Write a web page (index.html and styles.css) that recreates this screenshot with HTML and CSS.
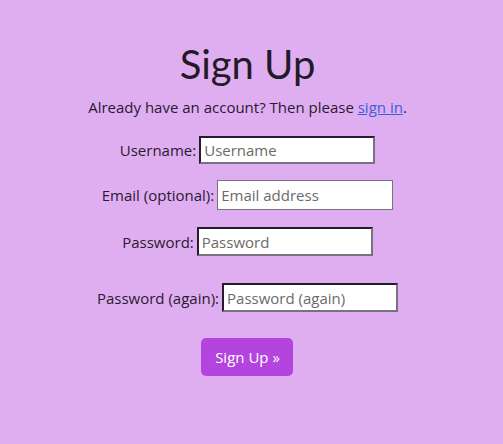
FILE: index.html
```html
<!DOCTYPE html>
<html>
<head>
<meta charset="utf-8">
<link rel="stylesheet" href="styles.css">
</head>
<body>
<main class="page">
  <h1 class="title">Sign Up</h1>
  <p class="intro">Already have an account? Then please <a href="#" class="link">sign in</a>.</p>
  <form class="form">
    <div class="row row-user">
      <label class="label">Username:</label>
      <input class="field field-inset field-user" type="text" placeholder="Username">
    </div>
    <div class="row row-email">
      <label class="label">Email (optional):</label>
      <input class="field field-plain field-email" type="email" placeholder="Email address">
    </div>
    <div class="row row-pass">
      <label class="label">Password:</label>
      <input class="field field-inset field-pass" type="password" placeholder="Password">
    </div>
    <div class="row row-pass2">
      <label class="label">Password (again):</label>
      <input class="field field-inset field-pass2" type="password" placeholder="Password (again)">
    </div>
    <div class="actions">
      <button type="button" class="btn">Sign Up »</button>
    </div>
  </form>
</main>
</body>
</html>
```
FILE: styles.css
```css
html, body {
  margin: 0;
  padding: 0;
  background: #dfaef0;
}
body {
  width: 495px;
  font-family: "Open Sans", "Noto Sans", sans-serif;
  color: #2a1a30;
}
.page {
  display: flex;
  flex-direction: column;
  align-items: center;
  padding-top: 40px;
}
.title {
  font-family: "Lato", sans-serif;
  font-weight: 400;
  font-size: 40px;
  line-height: 48px;
  margin: 0;
  color: #231a28;
}
.intro {
  margin: 8px 0 0;
  font-size: 15px;
  line-height: 22px;
}
.link {
  color: #3b5fe0;
}
.form {
  display: flex;
  flex-direction: column;
  align-items: center;
  margin-top: 18px;
}
.row {
  display: flex;
  align-items: center;
  justify-content: center;
  gap: 3px;
}
.label {
  font-size: 15px;
}
.field {
  box-sizing: border-box;
  width: 176px;
  background: #fff;
  font-family: "Open Sans", "Noto Sans", sans-serif;
  font-size: 15px;
  padding: 0 3px;
  margin: 0;
  color: #222;
}
.field::placeholder {
  color: #6a6a6a;
}
.field-inset {
  border-width: 2px;
  border-style: solid;
  border-top-color: #2a1a30;
  border-left-color: #2a1a30;
  border-bottom-color: #7a7080;
  border-right-color: #7a7080;
}
.field-plain {
  border: 1px solid #7a7080;
}
.field-user { height: 28px; }
.field-email { height: 30px; }
.field-pass { height: 29px; }
.field-pass2 { height: 29px; }
.row-email { margin-top: 16px; }
.row-pass { margin-top: 17px; }
.row-pass2 { margin-top: 27px; }
.actions { margin-top: 26px; }
.btn {
  background: #b444e0;
  color: #fff;
  border: none;
  border-radius: 5px;
  width: 92px;
  height: 38px;
  font-family: "Open Sans", "Noto Sans", sans-serif;
  font-size: 15px;
  padding: 0;
}
```
